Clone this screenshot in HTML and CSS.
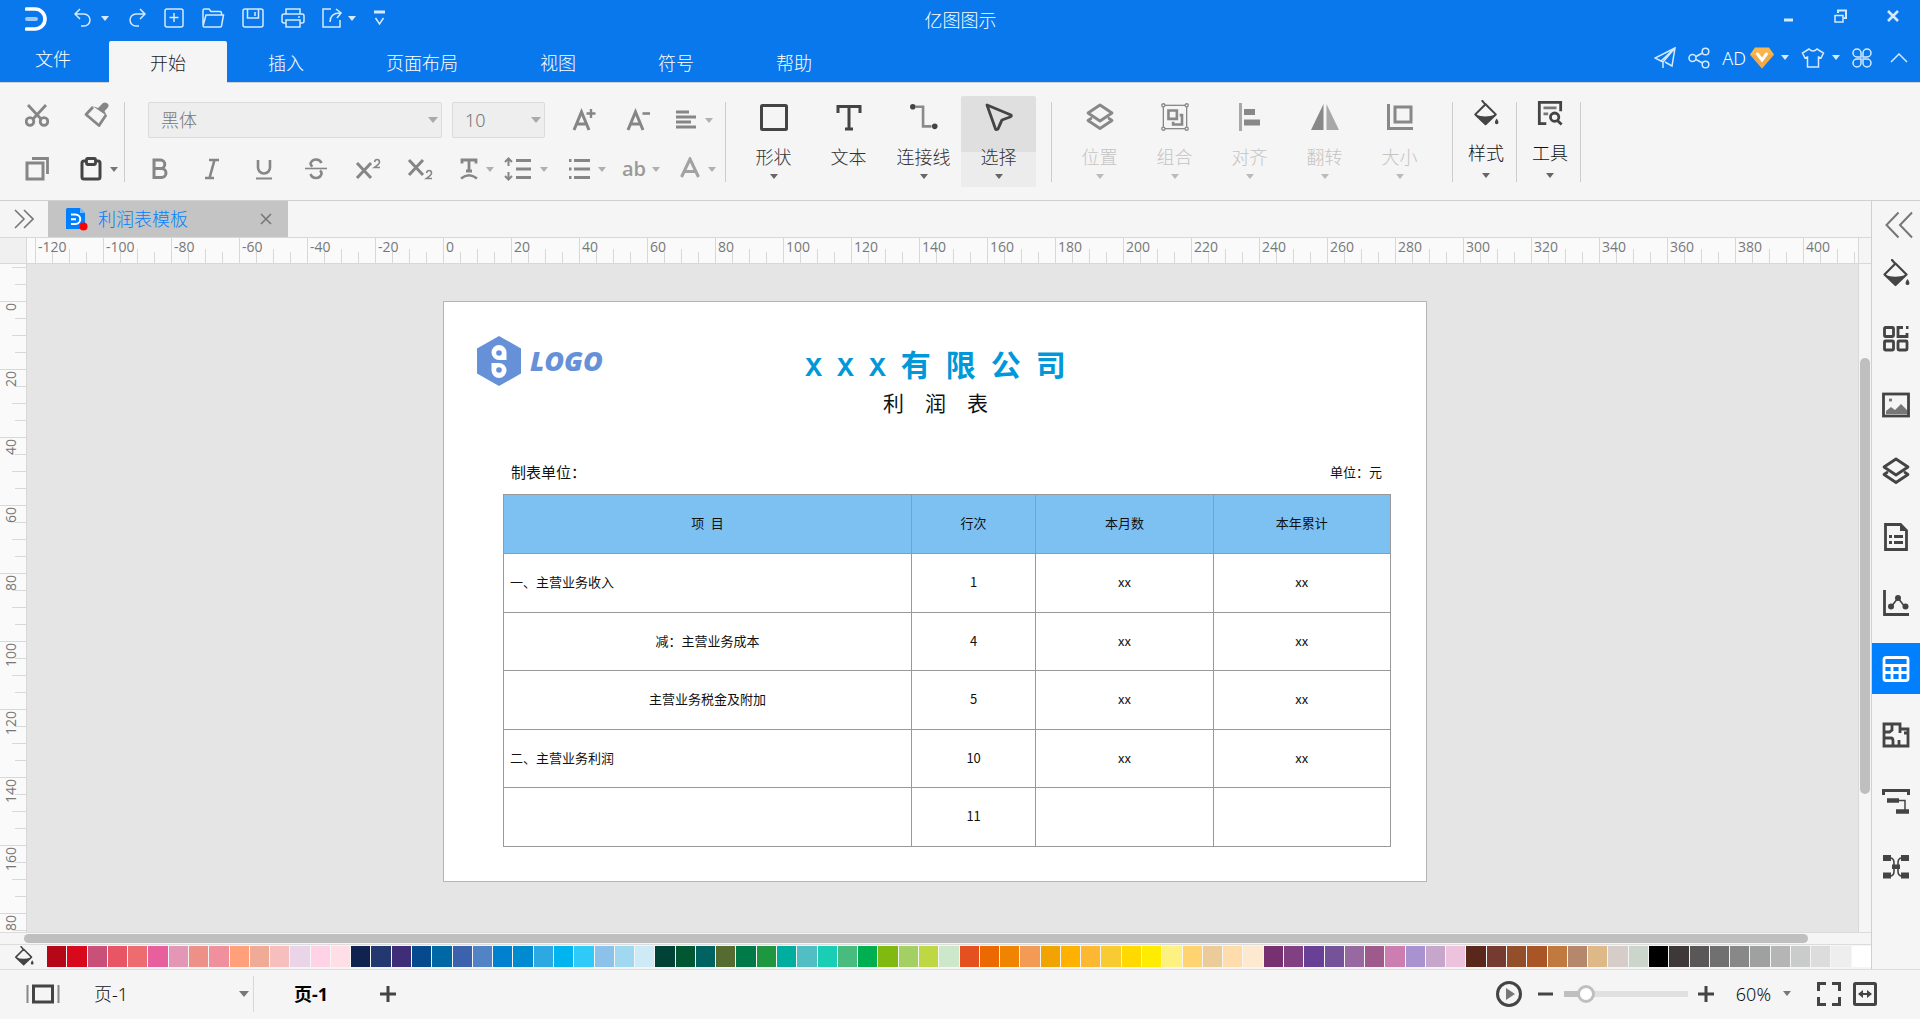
FILE: index.html
```html
<!DOCTYPE html>
<html lang="zh-CN">
<head>
<meta charset="utf-8">
<title>亿图图示</title>
<link rel="stylesheet" href="styles.css">
</head>
<body>
<svg class="defs" aria-hidden="true">
  <symbol id="bucket" viewBox="0 0 28 28"><path d="M10 1l3 3.500M13.500 4.500L2.500 15.500 13.500 26 24.500 15.500z" fill="none" stroke="currentColor" stroke-width="2.200" stroke-linejoin="round" stroke-linecap="round"/><path d="M3 16q10 3.500 21 0L13.500 26z" fill="currentColor"/><path d="M25.500 20c3 4 2 6 0 6s-3-2 0-6z" fill="currentColor"/></symbol>
  <symbol id="layers" viewBox="0 0 28 28"><path d="M14 2l12 8-12 8L2 10z" fill="none" stroke="currentColor" stroke-width="2.800" stroke-linejoin="round"/><path d="M5 15.500l-3 2 12 8 12-8-3-2" fill="none" stroke="currentColor" stroke-width="2.800" stroke-linejoin="round" stroke-linecap="round"/></symbol>
</svg>

<header class="top">
  <div class="titlebar">
    <svg class="brand" viewBox="0 0 22 24"><path d="M1.500 2H10a10 10 0 0 1 0 20H1.500" fill="none" stroke="#fff" stroke-width="3.600" stroke-linecap="round"/><path d="M2 12h9" stroke="#9cc9f8" stroke-width="4" stroke-linecap="round"/></svg>
    <nav class="quick" aria-label="快速访问">
      <button class="q q-undo" aria-label="撤销"><svg width="20" height="20" viewBox="0 0 20 20"><path d="M7 1L2 6l5 5M2 6h9a6 6 0 0 1 0 12H8"/></svg></button>
      <button class="q q-caret" aria-label="撤销列表"><i class="caret"></i></button>
      <button class="q q-redo" aria-label="重做"><svg width="20" height="20" viewBox="0 0 20 20"><path d="M13 1l5 5-5 5M18 6H9a6 6 0 0 0 0 12h3"/></svg></button>
      <button class="q" aria-label="新建"><svg width="20" height="20" viewBox="0 0 20 20"><rect x="1" y="1" width="18" height="18" rx="2"/><path d="M10 5v9M5.500 9.500h9"/></svg></button>
      <button class="q" aria-label="打开"><svg width="24" height="20" viewBox="0 0 24 20"><path d="M2 17V2.500Q2 1 3.500 1H8l2 2.500h9q1.500 0 1.500 1.500v2M2 18L5 7h17.500L20.500 18q-.3 1-1.500 1H3q-1 0-1-2"/></svg></button>
      <button class="q" aria-label="保存"><svg width="22" height="20" viewBox="0 0 22 20"><rect x="1" y="1" width="20" height="18" rx="2"/><path d="M5.500 1v9h11V1M13 4v4"/></svg></button>
      <button class="q" aria-label="打印"><svg width="24" height="20" viewBox="0 0 24 20"><path d="M5 6V1h14v5M5 15H3q-2 0-2-2V8q0-2 2-2h18q2 0 2 2v5q0 2-2 2h-2"/><rect x="5" y="12" width="14" height="7"/><path d="M17 9h2"/></svg></button>
      <button class="q q-export" aria-label="导出"><svg width="20" height="20" viewBox="0 0 20 20"><path d="M9 1H1v18h17v-7M8 14Q8 5 18 5M14 1l5 4-4 5"/></svg></button>
      <button class="q q-caret" aria-label="导出选项"><i class="caret"></i></button>
      <button class="q" aria-label="自定义"><svg width="12" height="16" viewBox="0 0 12 16"><path d="M0 2h11" stroke-width="3"/><path d="M1.500 8L5.500 14l4-6"/></svg></button>
    </nav>
    <h1 class="apptitle">亿图图示</h1>
    <div class="winctl">
      <button aria-label="最小化"><svg width="14" height="14" viewBox="0 0 14 14"><path d="M2 11h9" stroke-width="3"/></svg></button>
      <button aria-label="还原"><svg width="14" height="14" viewBox="0 0 14 14"><path d="M4 4V1.500h8V9H9.500M4 1.500h8" stroke-width="2"/><path d="M1 6.500h8V13H1z" stroke-width="1.500"/></svg></button>
      <button aria-label="关闭"><svg width="14" height="14" viewBox="0 0 14 14"><path d="M2 2l10 10M12 2L2 12" stroke-width="2.600"/></svg></button>
    </div>
  </div>
  <div class="menubar">
    <nav class="tabs">
      <button class="tab file">文件</button>
      <button class="tab active">开始</button>
      <button class="tab">插入</button>
      <button class="tab">页面布局</button>
      <button class="tab">视图</button>
      <button class="tab">符号</button>
      <button class="tab">帮助</button>
    </nav>
    <div class="account">
      <button aria-label="发送"><svg width="22" height="22" viewBox="0 0 22 22"><path d="M21 1L1 11l6 3L21 1l-3 18-7-4M7 14l2 1v6M21 1L9 15"/></svg></button>
      <button aria-label="分享"><svg width="22" height="22" viewBox="0 0 22 22"><circle cx="4.500" cy="11" r="3.500"/><circle cx="17.500" cy="4.500" r="3.300"/><circle cx="17.500" cy="17.500" r="3.300"/><path d="M8 9.500l6.500-3.500M8 12.500l6.500 3.500"/></svg></button>
      <button class="user">AD<svg width="26" height="24" viewBox="0 0 26 24"><path d="M6 1.500h14l5 7L13 22.500 1 8.500z" fill="#f9b54c" stroke="none"/><path d="M1 9l24 0-12 13.500z" fill="#eba03f" stroke="none" opacity=".5"/><path d="M8.500 8l4.500 6 4.500-6" stroke="#fff" stroke-width="3" stroke-linecap="round"/></svg></button>
      <button aria-label="账户"><i class="caret"></i></button>
      <button class="shirt" aria-label="皮肤"><svg width="24" height="20" viewBox="0 0 24 20"><path d="M8 1L1.500 5l2.500 5 2.500-1v10h11V9l2.500 1 2.500-5L16 1q-4 4-8 0z"/></svg></button>
      <button aria-label="皮肤选项"><i class="caret"></i></button>
      <button class="apps" aria-label="应用"><svg width="20" height="20" viewBox="0 0 20 20"><path d="M9 9V5a4 4 0 1 0-4 4zM11 9V5a4 4 0 1 1 4 4zM9 11v4a4 4 0 1 1-4-4zM11 11v4a4 4 0 1 0 4-4z"/></svg></button>
      <button aria-label="折叠"><svg width="18" height="12" viewBox="0 0 18 12"><path d="M1 10l8-8 8 8"/></svg></button>
    </div>
  </div>
</header>

<section class="ribbon" aria-label="开始">
  <div class="group clip">
    <button aria-label="剪切"><svg width="24" height="24" viewBox="0 0 24 24"><path d="M3 2l13 14M21 2L8 16"/><circle cx="5" cy="18.500" r="3.800"/><circle cx="19" cy="18.500" r="3.800"/></svg></button>
    <button class="brush" aria-label="格式刷"><svg width="26" height="26" viewBox="0 0 26 26"><path d="M9 5L2 12.500l13 11L22 13" stroke-linejoin="round"/><path d="M8.500 4l5.500 2 5-5q3-1.500 5 1 1.500 2-1 4.500L20.500 9l2.500 5z" fill="currentColor" stroke="none"/></svg></button>
    <button aria-label="复制"><svg width="24" height="24" viewBox="0 0 24 24"><rect x="2" y="6" width="16" height="16" stroke-width="3"/><path d="M7 1.500h15.500V17"/></svg></button>
    <button class="dark paste"  aria-label="粘贴"><svg width="22" height="24" viewBox="0 0 22 24"><rect x="2" y="4" width="18" height="18" rx="2" stroke-width="3"/><rect x="6.500" y="1.500" width="9" height="6" rx="1" fill="#f5f5f5"/></svg><i class="caret"></i></button>
  </div>
  <div class="group font">
    <div class="line one">
      <span class="combo family"><select aria-label="字体"><option>黑体</option></select></span>
      <span class="combo size"><select aria-label="字号"><option>10</option></select></span>
      <button class="grow" aria-label="增大字号"><svg width="24" height="24" viewBox="0 0 24 24"><path d="M2 22L9.500 4 17 22M5 16h9" stroke-width="3"/><path d="M19 1v9M14.500 5.500h9" stroke-width="2.400"/></svg></button>
      <button class="shrink" aria-label="减小字号"><svg width="24" height="24" viewBox="0 0 24 24"><path d="M2 22L9.500 4 17 22M5 16h9" stroke-width="3"/><path d="M16.500 5.500h7.500" stroke-width="2.600"/></svg></button>
      <button class="drop" aria-label="对齐方式"><svg width="22" height="22" viewBox="0 0 22 22"><path d="M1 3h13M1 8h20M1 13h15M1 18h20" stroke-width="3"/></svg><i class="caret"></i></button>
    </div>
    <div class="line two">
      <button aria-label="加粗"><svg width="18" height="22" viewBox="0 0 18 22"><path d="M3 2h6.500a4.300 4.300 0 0 1 0 8.600H3zM3 10.500h7.500a4.500 4.500 0 0 1 0 9H3z" stroke-width="3"/></svg></button>
      <button aria-label="斜体"><svg width="18" height="22" viewBox="0 0 18 22"><path d="M6 2h10M2 20h9M11.500 2l-5 18" stroke-width="2.600"/></svg></button>
      <button aria-label="下划线"><svg width="18" height="22" viewBox="0 0 18 22"><path d="M3 2v7.500a6 6 0 0 0 12 0V2" stroke-width="2.600"/><path d="M1 20.500h16" stroke-width="2"/></svg></button>
      <button aria-label="删除线"><svg width="24" height="22" viewBox="0 0 24 22"><path d="M17.500 5q-1.500-3.500-5.500-3.500T6.500 5.500q0 1.700 2 3M6.500 16q1.500 4 5.500 4t5.500-4q.3-2-1.500-3.500" stroke-width="2.600"/><path d="M1 10.500h22" stroke-width="1.600"/></svg></button>
      <button aria-label="上标"><svg width="26" height="22" viewBox="0 0 26 22"><path d="M2 5l14 15M16 5L2 20" stroke-width="3"/><path d="M19.500 4q.5-2.500 2.700-2.500T24.500 4q0 2-5 5.500h5.500" stroke-width="1.600"/></svg></button>
      <button aria-label="下标"><svg width="26" height="22" viewBox="0 0 26 22"><path d="M2 2l14 15M16 2L2 17" stroke-width="3"/><path d="M19.500 15q.5-2.500 2.700-2.500T24.500 15q0 2-5 5.500h5.500" stroke-width="1.600"/></svg></button>
      <button class="drop" aria-label="文字方向"><svg width="18" height="22" viewBox="0 0 18 22"><path d="M2 5.500V2h14v3.500M9 2v11M6 13h6" stroke-width="2.800"/><path d="M1 20.500Q9 14 17 20.500" stroke-width="2.400"/></svg><i class="caret"></i></button>
      <button class="drop" aria-label="行距"><svg width="28" height="24" viewBox="0 0 28 24"><path d="M4.500 2v7M1 5l3.500-3.500L8 5M4.500 15v7M1 19l3.500 3.500L8 19" stroke-width="2"/><path d="M12 3.500h15M12 12h15M12 20.500h15" stroke-width="3"/></svg><i class="caret"></i></button>
      <button class="drop" aria-label="列表"><svg width="22" height="22" viewBox="0 0 22 22"><path d="M1 2.500h2.500M1 11h2.500M1 19.500h2.500M6 2.500h16M6 11h16M6 19.500h16" stroke-width="3"/></svg><i class="caret"></i></button>
      <button class="drop ab" aria-label="大小写"><b>ab</b><i class="caret"></i></button>
      <button class="drop" aria-label="字体颜色"><svg width="20" height="24" viewBox="0 0 20 24"><path d="M1.500 20L10 2l8.500 18M4.500 14.500h11" stroke-width="3" opacity=".75"/></svg><i class="caret"></i></button>
    </div>
  </div>
  <div class="group big">
    <button class="tool"><svg viewBox="0 0 28 28"><rect x="1.500" y="2.500" width="25" height="24" rx="1"/></svg><span>形状</span><i class="caret"></i></button>
    <button class="tool"><svg viewBox="0 0 28 28"><path d="M3 10V3.500h22V10M14 3.500V26M10 26h8"/></svg><span>文本</span></button>
    <button class="tool"><svg viewBox="0 0 30 28"><g stroke="#8a8a8a" stroke-width="2.800"><path d="M6 3h8v21h9"/></g><circle cx="3" cy="3" r="3" fill="currentColor" stroke="none"/><circle cx="26.500" cy="24" r="3" fill="currentColor" stroke="none"/></svg><span>连接线</span><i class="caret"></i></button>
    <button class="tool chosen"><svg viewBox="0 0 28 28"><path d="M2 2l24 10q1 1-1 2l-8 3q-1 2-4 9-2 1-2.500 0z" stroke-width="2.800" stroke-linejoin="round"/></svg><span>选择</span><i class="caret"></i></button>
  </div>
  <div class="group big arrange">
    <button class="tool" disabled><svg><use href="#layers"/></svg><span>位置</span><i class="caret"></i></button>
    <button class="tool" disabled><svg class="wide" viewBox="0 0 30 30"><g stroke-width="1.400"><rect x="2.500" y="2.500" width="25" height="25"/><g fill="#f5f5f5"><circle cx="2.500" cy="2.500" r="1.700"/><circle cx="27.500" cy="2.500" r="1.700"/><circle cx="2.500" cy="27.500" r="1.700"/><circle cx="27.500" cy="27.500" r="1.700"/></g></g><path d="M8 8h9v9H8zM20 13h2.500v10H13v-3" stroke-width="2.800"/></svg><span>组合</span><i class="caret"></i></button>
    <button class="tool" disabled><svg viewBox="0 0 28 28"><path d="M4.500 0v28" opacity=".7"/><path d="M8 9h11M8 19.500h16" stroke-width="6"/></svg><span>对齐</span><i class="caret"></i></button>
    <button class="tool" disabled><svg viewBox="0 0 28 28"><path d="M12.500 1v26H0z" fill="currentColor" stroke="none"/><path d="M15.500 1v26H28z" fill="#a8a8a8" stroke="none"/></svg><span>翻转</span><i class="caret"></i></button>
    <button class="tool" disabled><svg viewBox="0 0 28 28"><path d="M2.500 1v24.500H27"/><rect x="9" y="4" width="16" height="15"/></svg><span>大小</span><i class="caret"></i></button>
  </div>
  <div class="group big single"><button class="tool"><svg><use href="#bucket"/></svg><span>样式</span><i class="caret"></i></button></div>
  <div class="group big single last"><button class="tool"><svg viewBox="0 0 28 28"><path d="M10 25.500H2.500v-23h23V12"/><path d="M7 8.500h14M7 15h5" stroke="#777"/><circle cx="19" cy="18.500" r="4.500"/><path d="M22 22l4.500 4.500"/></svg><span>工具</span><i class="caret"></i></button></div>
</section>

<main class="work">
  <div class="editor">
    <div class="doctabs">
      <button class="expand" aria-label="展开"><svg width="20" height="20" viewBox="0 0 20 20"><path d="M1 1l9 9-9 9M10 1l9 9-9 9"/></svg></button>
      <div class="doctab">
        <svg class="docicon" width="22" height="23" viewBox="0 0 22 23"><path d="M0 1.500Q0 0 1.500 0H14l5 5v16H0z" fill="#0080ff"/><path d="M14 0l5 5h-5z" fill="#7db9f5"/><path d="M5 6.500h4.500a4.500 4.500 0 0 1 0 9.500H5M5 11.200h5" fill="none" stroke="#fff" stroke-width="2"/><circle cx="17.500" cy="18.500" r="4" fill="#f00"/></svg>
        <span>利润表模板</span>
        <button aria-label="关闭文档"><svg width="12" height="12" viewBox="0 0 12 12"><path d="M1 1l10 10M11 1L1 11"/></svg></button>
      </div>
    </div>
    <div class="ruler-row">
      <div class="corner"></div>
      <div class="hruler"><span>-120</span><span>-100</span><span>-80</span><span>-60</span><span>-40</span><span>-20</span><span>0</span><span>20</span><span>40</span><span>60</span><span>80</span><span>100</span><span>120</span><span>140</span><span>160</span><span>180</span><span>200</span><span>220</span><span>240</span><span>260</span><span>280</span><span>300</span><span>320</span><span>340</span><span>360</span><span>380</span><span>400</span></div>
      <div class="vtop"></div>
    </div>
    <div class="stage">
      <div class="vruler"><span>0</span><span>20</span><span>40</span><span>60</span><span>80</span><span>100</span><span>120</span><span>140</span><span>160</span><span>180</span></div>
      <div class="canvas">
        <article class="paper">
          <header class="head">
            <div class="logo"><svg width="44" height="50" viewBox="0 0 44 50"><path d="M22 0l22 12.500v25L22 50 0 37.500v-25z" fill="#6691d9"/><path d="M22 9a7.500 7.500 0 0 1 7.500 7.500V24H22a7.500 7.500 0 0 1 0-15z" fill="#fff"/><circle cx="22" cy="17" r="2.800" fill="#6691d9"/><path d="M14.500 27H22a7.500 7.500 0 1 1-7.500 7.500z" fill="#fff"/><circle cx="22" cy="34" r="2.800" fill="#6691d9"/></svg><span>LOGO</span></div>
            <div class="titles">
              <h2><span class="latin">X</span>&ensp;<span class="latin">X</span>&ensp;<span class="latin">X</span>&ensp;有&ensp;限&ensp;公&ensp;司</h2>
              <h3>利&emsp;润&emsp;表</h3>
            </div>
          </header>
          <div class="caption"><span>制表单位：</span><span class="unit">单位：元</span></div>
          <table>
            <colgroup><col class="c1"><col class="c2"><col class="c3"><col class="c3"></colgroup>
            <thead><tr><th>项&ensp;目</th><th>行次</th><th>本月数</th><th>本年累计</th></tr></thead>
            <tbody>
              <tr><td class="left">一、主营业务收入</td><td>1</td><td>xx</td><td>xx</td></tr>
              <tr><td>减：主营业务成本</td><td>4</td><td>xx</td><td>xx</td></tr>
              <tr><td>主营业务税金及附加</td><td>5</td><td>xx</td><td>xx</td></tr>
              <tr><td class="left">二、主营业务利润</td><td>10</td><td>xx</td><td>xx</td></tr>
              <tr><td></td><td>11</td><td></td><td></td></tr>
            </tbody>
          </table>
        </article>
      </div>
      <div class="vscroll"><div class="thumb"></div></div>
    </div>
    <div class="hscroll"><div class="thumb"></div></div>
    <div class="palette">
      <svg class="fill"><use href="#bucket"/></svg>
      <div class="swatches" id="swatches"></div>
    </div>
  </div>
  <aside class="side">
    <button class="fold" aria-label="收起"><svg width="28" height="28" viewBox="0 0 28 28"><path d="M13.500 1.500L1.500 14l12 12.500M27 1.500L15 14l12 12.500" stroke="#777" stroke-width="2"/></svg></button>
    <button aria-label="填充"><svg width="28" height="28"><use href="#bucket"/></svg></button>
    <button aria-label="符号库"><svg width="28" height="28" viewBox="0 0 28 28"><rect x="2.500" y="2.500" width="9" height="9" rx="1"/><rect x="2.500" y="16" width="9" height="9" rx="1"/><rect x="16" y="16" width="9" height="9" rx="1"/><path d="M21 2.500h-5v9h9V8M24 2.500h2.500"/></svg></button>
    <button aria-label="图片"><svg width="28" height="28" viewBox="0 0 28 28"><rect x="1.500" y="3" width="25" height="22"/><path d="M4 23v-3l5-4 4 3 6-6 6 6v4z" fill="#777" stroke="none"/><path d="M7 9h3" stroke="#777"/></svg></button>
    <button aria-label="图层"><svg width="28" height="28"><use href="#layers"/></svg></button>
    <button aria-label="文档"><svg width="28" height="28" viewBox="0 0 28 28"><path d="M3.500 1.500h15l6 6V26.500h-21z"/><path d="M18 1v7h7zM7 12h3v3H7zM7 18h3v3H7z" fill="currentColor" stroke="none"/><path d="M12 13.500h9M12 19.500h9"/></svg></button>
    <button aria-label="图表"><svg width="28" height="28" viewBox="0 0 28 28"><path d="M2.500 1v24.500H27"/><path d="M9 18l7-9 7 9" stroke-width="1.600"/><g fill="currentColor" stroke="none"><circle cx="9" cy="17.500" r="3"/><circle cx="16" cy="9" r="3"/><circle cx="23.500" cy="17.500" r="3"/></g></svg></button>
    <button class="on" aria-label="表格"><svg width="28" height="28" viewBox="0 0 28 28"><rect x="2" y="2.500" width="24" height="23" rx="2"/><path d="M2 10.500h24M2 17.500h24M10 10v15M18 10v15"/></svg></button>
    <button aria-label="平面图"><svg width="28" height="28" viewBox="0 0 28 28"><path d="M2 3h16v5h8v17H2zM10 3v6L7.500 11H2M18 8v4M2 17h7q2 0 2 3v5M17 25v-6M22 12h4"/></svg></button>
    <button aria-label="甘特图"><svg width="28" height="28" viewBox="0 0 28 28"><path d="M1.500 8V3.500h25V8" stroke-width="3"/><path d="M5 13.500h12M14 24.500h13" stroke-width="4.500"/><path d="M17 13.500h6V23" stroke-width="1.500"/></svg></button>
    <button aria-label="思维导图"><svg width="28" height="28" viewBox="0 0 28 28"><path d="M8 5q4 0 4 5v8q0 5-4 5M20 5q-4 0-4 5v8q0 5 4 5" stroke-width="1.600"/><path d="M1 2h8v6H1zM19 2h8v6h-8zM1 19.500h8v6H1zM19 19.500h8v6h-8zM10 11.500h8v4.500h-8z" fill="currentColor" stroke="none"/></svg></button>
  </aside>
</main>

<footer class="status">
  <button class="thumbs" aria-label="页面缩略图"><svg width="34" height="20" viewBox="0 0 34 20"><rect x="7.500" y="2" width="19" height="16" stroke-width="3"/><path d="M1.500 1v18M32.500 1v18" stroke="#888" stroke-width="2"/></svg></button>
  <button class="pagepick">页-1<i class="caret"></i></button>
  <button class="pagetab">页-1</button>
  <button class="add" aria-label="添加页"><svg width="16" height="16" viewBox="0 0 16 16"><path d="M8 0v16M0 8h16"/></svg></button>
  <div class="zoom">
    <button class="play" aria-label="播放"><svg width="26" height="26" viewBox="0 0 26 26"><circle cx="13" cy="13" r="11.500"/><path d="M10 7l9 6-9 6z" fill="#777" stroke="none"/></svg></button>
    <button aria-label="缩小"><svg width="16" height="16" viewBox="0 0 16 16"><path d="M0 8h15"/></svg></button>
    <input type="range" min="0" max="100" value="12" aria-label="缩放">
    <button aria-label="放大"><svg width="16" height="16" viewBox="0 0 16 16"><path d="M8 0v16M0 8h16"/></svg></button>
    <button class="pct">60%<i class="caret"></i></button>
    <button class="full" aria-label="全屏"><svg width="24" height="24" viewBox="0 0 24 24"><path d="M1.500 9V1.500H9M15 1.500h7.500V9M22.500 15v7.500H15M9 22.500H1.500V15"/></svg></button>
    <button aria-label="适合宽度"><svg width="24" height="24" viewBox="0 0 24 24"><rect x="1.500" y="1.500" width="21" height="21" rx="1"/><path d="M6 12h12" stroke-width="2"/><path d="M5 12l5-4v8zM19 12l-5-4v8z" fill="currentColor" stroke="none"/></svg></button>
  </div>
</footer>
<script src="script.js"></script>
</body>
</html>
```
FILE: styles.css
```css
* { box-sizing: border-box; }
html, body { height: 100%; margin: 0; }
body {
  display: flex;
  flex-direction: column;
  background: #f5f5f5;
  color: #222;
  font: 300 18px/24px "Noto Sans", "Noto Sans CJK SC", sans-serif;
  overflow: hidden;
}
button {
  display: inline-flex;
  align-items: center;
  justify-content: center;
  flex: none;
  padding: 0;
  border: 0;
  background: none;
  color: inherit;
  font: inherit;
}
svg { display: block; fill: none; stroke: currentColor; stroke-width: 2; flex: none; }
symbol { stroke: none; }
.defs { display: none; }
.caret {
  flex: none;
  width: 0;
  height: 0;
  border: 4px solid transparent;
  border-top: 5px solid currentColor;
  border-bottom: 0;
}

/* title bar and menu */
.top { background: #0a78ed; color: #fff; border-bottom: 1px solid #d0d0d0; flex: none; }
.top svg { stroke-width: 1.500; }
.titlebar { display: grid; grid-template-columns: 1fr auto 1fr; align-items: start; height: 41px; padding-left: 25px; position: relative; }
.brand { position: absolute; left: 25px; top: 7px; width: 22px; height: 24px; }
.quick { display: flex; align-items: center; height: 32px; padding: 4px 0 0 48px; color: #d6e9fd; gap: 17px; }
.quick .q-undo { margin-right: -9px; }
.quick .q-caret { margin-right: 1px; }
.quick .q-export { margin-right: -11px; }
.apptitle { margin: 8px 0 0; font-size: 18px; font-weight: 300; line-height: 24px; padding-right: 24px; }
.winctl { display: flex; justify-content: flex-end; gap: 38px; padding: 9px 20px 0 0; color: #d6e9fd; }
.menubar { display: flex; justify-content: space-between; height: 41px; }
.tabs { display: flex; }
.tab { padding: 2px 41px 0; }
.tab.file { padding: 0 38px 5px 35px; }
.tab.active { background: #f5f5f5; color: #222; border-radius: 2px 2px 0 0; margin-bottom: -1px; }
.account { display: flex; align-items: center; gap: 12px; padding: 0 12px 8px 0; color: #d6e9fd; }
.user { color: #fff; gap: 3px; margin-right: -6px; }
.shirt { margin-right: -5px; }
.apps { margin-right: 6px; }

/* ribbon */
.ribbon { display: flex; height: 118px; flex: none; border-bottom: 1px solid #d0d0d0; padding: 13px 0; color: #868686; }
.group { position: relative; flex: none; }
.group::after { content: ""; position: absolute; right: 0; top: 6px; height: 80px; width: 1px; background: #ccc; }
.clip { width: 125px; display: grid; grid-template-columns: 56px 40px; column-gap: 6px; padding: 0 0 0 9px; grid-template-rows: 38px 70px; height: 92px; }
.clip svg { stroke-width: 2.800; }
.brush { padding-left: 12px; }
.clip .paste { gap: 8px; width: 56px; }
.clip .paste .caret { color: #777; }
.dark { color: #444; }
.font { width: 601px; padding: 6px 0 0 23px; }
.line { display: flex; align-items: center; }
.line .caret { color: #b0b0b0; }
.one { height: 36px; }
.two { height: 62px; }
.combo { position: relative; display: block; height: 36px; }
.combo::after { content: ""; position: absolute; right: 4px; top: 15px; border: 5px solid transparent; border-top: 6px solid #aaa; border-bottom: 0; }
.combo select { appearance: none; width: 100%; height: 100%; padding: 0 12px; font: inherit; color: #777; background: #eee; border: 1px solid #dadde0; border-radius: 2px; }
.family { width: 294px; margin-right: 10px; }
.size { width: 93px; margin-right: 27px; }
.grow { margin-right: 30px; }
.shrink { margin-right: 25px; }
.drop { gap: 8px; }
.two > button { width: 52px; }
.two > button:first-child { margin-left: -14px; }
.two > .drop { width: 56px; justify-content: flex-end; }
.two > .drop:nth-child(7) { width: 48px; }
.two > .drop:nth-child(8) { width: 54px; }
.two > .drop:nth-child(9) { width: 58px; }
.ab b { font: 600 20px/24px "Open Sans", sans-serif; color: #999; }
.two > .ab { gap: 6px; width: 54px; }
.big { display: flex; padding-left: 10px; color: #444; }
.big:nth-child(3) { width: 326px; }
.tool { flex-direction: column; justify-content: flex-start; width: 75px; height: 91px; padding-top: 7px; }
.tool svg { width: 28px; height: 28px; stroke-width: 3; }
.tool .wide { width: 30px; }
.tool span { margin-top: 14px; color: #333; }
.tool .caret { margin-top: 5px; color: #666; border-width: 5px 4px 0; }
.tool.chosen { background: linear-gradient(#dfdfdf 56px, #ececec 56px); border-radius: 2px; }
.tool:disabled { color: #888; }
.tool:disabled span { color: #c4c4c4; }
.tool:disabled .caret { color: #bbb; }
.arrange { width: 401px; }
.single { width: 64px; padding-left: 3px; }
.single .tool { width: 60px; padding-top: 4px; }
.tool .small, .single svg { width: 26px; height: 26px; }
.single .tool span { color: #111; margin-top: 15px; }
.single .tool .caret { margin-top: 8px; }

/* editor */
.work { flex: 1; display: flex; min-height: 0; }
.editor { flex: 1; display: flex; flex-direction: column; min-width: 0; }
.doctabs { display: flex; height: 37px; flex: none; border-bottom: 1px solid #d8d8d8; color: #777; }
.doctabs svg { stroke-width: 1.600; }
.expand { width: 48px; }
.doctab { display: flex; align-items: center; width: 240px; background: #c4c4c4; padding: 0 16px 0 18px; }
.doctab .docicon { stroke: none; margin-right: 10px; }
.doctab span { flex: 1; color: #0080ff; }
.ruler-row { display: flex; height: 26px; flex: none; border-bottom: 1px solid #d8d8d8; font: 400 14px/18px "Open Sans", sans-serif; color: #777; }
.corner { width: 27px; border-right: 1px solid #d8d8d8; background: #f0f0f0; flex: none; }
.hruler {
  flex: 1;
  display: flex;
  overflow: hidden;
  padding-left: 8px;
  background:
    repeating-linear-gradient(90deg, #d8d8d8 0 1px, transparent 1px 68px) 8px 0 / 100% 100% no-repeat,
    repeating-linear-gradient(90deg, transparent 0 34px, #d8d8d8 34px 35px, transparent 35px 68px) 8px 11px / 100% 14px no-repeat,
    repeating-linear-gradient(90deg, transparent 0 17px, #d8d8d8 17px 18px, transparent 18px 34px) 8px 14px / 100% 11px no-repeat,
    #fafafa;
}
.hruler span { flex: 0 0 68px; padding-left: 3px; }
.vtop { width: 13px; flex: none; border-left: 1px solid #d8d8d8; }
.stage { flex: 1; display: flex; min-height: 0; }
.vruler {
  width: 27px;
  flex: none;
  overflow: hidden;
  border-right: 1px solid #d8d8d8;
  padding-top: 39px;
  color: #777;
  font: 400 14px/18px "Open Sans", sans-serif;
  background:
    repeating-linear-gradient(transparent 0 37px, #d8d8d8 37px 38px, transparent 38px 68px) 0 0 / 100% 100% no-repeat,
    repeating-linear-gradient(transparent 0 3px, #d8d8d8 3px 4px, transparent 4px 68px) 12px 0 / 14px 100% no-repeat,
    repeating-linear-gradient(transparent 0 3px, #d8d8d8 3px 4px, transparent 4px 17px) 15px 0 / 11px 100% no-repeat,
    #fafafa;
}
.vruler span { display: block; height: 68px; padding-right: 2px; writing-mode: vertical-rl; transform: rotate(180deg); text-align: right; width: 18px; }
.canvas { flex: 1; min-width: 0; overflow: hidden; background: #e5e5e5; padding: 37px 0 0 416px; }
.paper { width: 984px; min-height: 580px; background: #fff; border: 1px solid #b5b5b5; padding: 0 35px 34px 59px; font-family: "Noto Sans CJK SC", sans-serif; font-weight: 400; color: #111; }
.head { position: relative; height: 152px; padding-top: 41px; text-align: center; }
.logo { position: absolute; left: -26px; top: 34px; display: flex; align-items: center; gap: 9px; color: #6691d9; font: italic 800 27px/30px "Open Sans", sans-serif; }
.logo svg { stroke: none; }
.titles { margin-right: 23px; }
.head h2 { margin: 0; font-size: 30px; line-height: 40px; font-weight: 700; color: #0098d8; }
.latin { font: 700 28px/30px "Liberation Sans Narrow", "Liberation Mono", monospace; }
.head h3 { margin: 0; font-size: 21px; line-height: 36px; font-weight: 400; }
.caption { display: flex; justify-content: space-between; align-items: center; height: 40px; padding: 0 9px 4px 8px; font-size: 15px; line-height: 20px; }
.unit { font-size: 13px; }
table { width: 100%; border-collapse: collapse; table-layout: fixed; font-size: 13px; line-height: 18px; }
.c1 { width: 46%; }
.c2 { width: 14%; }
.c3 { width: 20%; }
th, td { height: 58px; padding: 0 6px 2px; border: 1px solid #999; text-align: center; font-weight: 400; }
th, tr:nth-child(odd) td { height: 59px; }
th { background: #7cc1f2; }
.left { text-align: left; }
.vscroll { width: 13px; flex: none; border-left: 1px solid #d8d8d8; padding: 94px 1px 0; }
.vscroll .thumb { height: 76%; background: #bfbfbf; border-radius: 5px; }
.hscroll { height: 13px; flex: none; border: solid #dcdcdc; border-width: 1px 0; padding: 1px 63px 1px 24px; }
.hscroll .thumb { height: 9px; background: #bfbfbf; border-radius: 5px; }
.palette { display: flex; align-items: flex-start; height: 24px; padding-top: 1px; flex: none; }
.fill { width: 20px; height: 20px; margin: 0 13px 0 14px; color: #444; stroke: none; }
.swatches { flex: 1; display: grid; grid-template-columns: repeat(90, 1fr); gap: 1px; height: 21px; }
.swatches button { width: auto; }

/* side panel */
.side { width: 49px; flex: none; border-left: 1px solid #d0d0d0; display: flex; flex-direction: column; gap: 15px; color: #444; }
.side svg { stroke-width: 2.800; }
.side use { stroke: none; }
.side button { height: 51px; }
.side .fold { height: 31px; padding: 16px 0 0 6px; }
.side .on { background: #0080ff; color: #fff; }

/* status bar */
.status { display: flex; align-items: center; height: 50px; flex: none; border-top: 1px solid #dcdcdc; padding: 0 0 2px 26px; color: #444; }
.status svg { stroke-width: 3; }
.pagepick { width: 160px; height: 36px; margin-left: 34px; padding-right: 4px; justify-content: space-between; color: #111; border-right: 1px solid #d8d8d8; }
.pagepick .caret, .pct .caret { color: #777; border-width: 6px 5px 0; }
.pagetab { margin-left: 40px; font-weight: 700; color: #000; }
.add { margin-left: 52px; }
.zoom { display: flex; align-items: center; gap: 16px; margin-left: auto; padding-right: 43px; }
.zoom input { appearance: none; width: 124px; height: 22px; margin: 0 -6px; background: linear-gradient(90deg, #bfbfbf 20px, #e0e0e0 20px) center / 100% 6px no-repeat; }
.zoom input::-webkit-slider-thumb { appearance: none; width: 18px; height: 18px; border: 3px solid #bfbfbf; border-radius: 50%; background: #fff; }
.pct { gap: 12px; color: #111; margin-left: 6px; }
.pct .caret { border-width: 5px 4px 0; }
.full { margin-left: 10px; margin-right: -4px; }
```
FILE: script.js
```js
const colors = (
  'b50718 d9091d c95079 e85565 ec6c70 e85f9e e496b5 ed9088 f0909c ffa07a f0ab96 f6bebc ead5e8 ffd3e5 ffdfe5 ' +
  '10224e 22386e 402d77 07498d 0068a5 3d62ad 5283c4 0081cf 008bd0 2ca8e3 00b4f0 30caf9 8cc2ea a0d9ef cdebf7 ' +
  '004236 005731 006261 556b2f 007a48 1f9640 00ae9f 50bec3 19ceb5 48bb7f 00b050 80b910 a3d062 bdd843 cde7ca ' +
  'e4501f ec6800 f08400 f39b54 f1a400 ffb100 fdb833 f9cb33 ffd900 ffec00 fdf281 fed370 ebcc99 ffdcac fde8d0 ' +
  '783170 814082 684196 745399 9868a0 9d5a8b cd7eb1 a992d0 c6a6cb ecc2dd ' +
  '5a281a 753b30 934e2a aa5525 c07a40 b5876c deb887 d6cdc8 ccd5cc ' +
  '000000 3e3838 595757 707070 888888 9fa0a0 b5b5b5 cacccb dcdcdc eeeeee ffffff'
).split(' ');
const swatches = document.getElementById('swatches');
for (const color of colors) {
  const swatch = document.createElement('button');
  swatch.setAttribute('aria-label', '#' + color);
  swatch.style.background = '#' + color;
  swatches.append(swatch);
}
```
